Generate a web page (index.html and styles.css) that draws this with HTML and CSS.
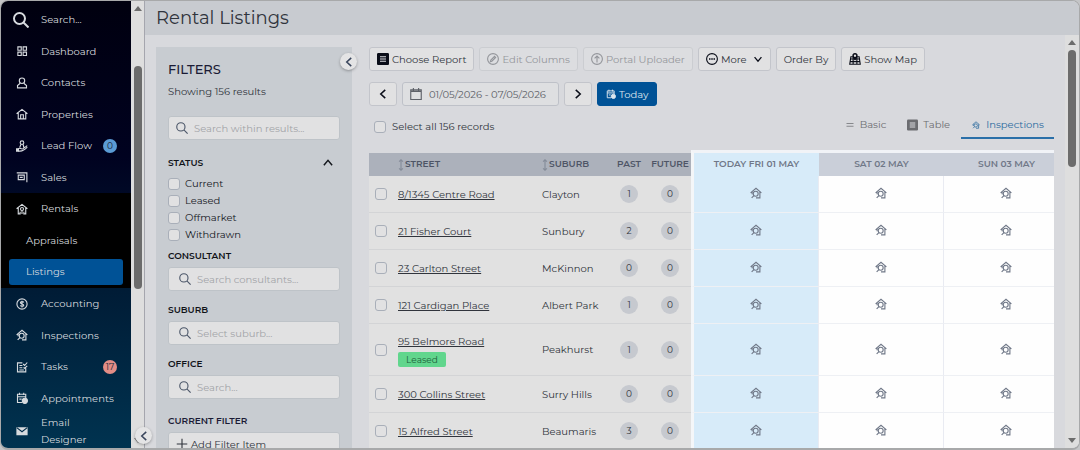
FILE: index.html
```
<!DOCTYPE html>
<html lang="en">
  <head>
    <meta charset="UTF-8" />
    <meta name="viewport" content="width=device-width, initial-scale=1.0" />
    <title>Rental Listings</title>
    <link rel="stylesheet" href="styles.css">
  </head>
  <body>
    <svg class="sprite" aria-hidden="true">
      <symbol id="i-search" viewBox="0 0 16 16"><circle cx="6.5" cy="6.5" r="5.5" /><path d="M10.5 10.5L15.5 15.5" /></symbol>
      <symbol id="i-grid" viewBox="0 0 16 16"><path d="M2.5 2.5H7V7H2.5zM9.5 2.5H14V7H9.5zM2.5 9.5H7V14H2.5zM9.5 9.5H14V14H9.5z" /></symbol>
      <symbol id="i-person" viewBox="0 0 16 16"><circle cx="8" cy="5" r="3.6" /><path d="M5.6 8.3L2 11.5V14.5h12v-3L10.4 8.3" /></symbol>
      <symbol id="i-home" viewBox="0 0 16 16"><path d="M.8 7.6L8 1.8l7.2 5.8M3 6.5v8h10v-8M6.2 14v-5h3.6v5" /></symbol>
      <symbol id="i-lead" viewBox="0 0 16 16"><circle cx="8" cy="3.5" r="2.4" /><path d="M6.5 6L5 10M9.5 6l1 4M3 12c2-3 4 1.5 6.5-.5L15 7.5M3 14.5c4 1 7.5 0 12-5" /><path d="M0 11h4v4.5H0z" fill="currentColor" stroke="none" /></symbol>
      <symbol id="i-sign" viewBox="0 0 16 16"><path d="M1 2.5h13.5V15M3 5.5h8v6H3zM5 8.5h4" /></symbol>
      <symbol id="i-rent" viewBox="0 0 16 16"><path d="M.8 7.6L8 1.8l7.2 5.8M3 6.5v8h2.5v-3M13 6.5v8h-2.5v-3" /><circle cx="8" cy="8" r="2" /><path d="M8 10v4.5" /></symbol>
      <symbol id="i-dollar" viewBox="0 0 16 16"><circle cx="8" cy="8" r="6.8" /><path d="M10.3 6c-.4-1.6-4.4-1.6-4.4.3 0 2 4.4 1.2 4.4 3.3 0 1.9-4 1.9-4.6.2M8 3.5v9" /></symbol>
      <symbol id="i-inspect" viewBox="0 0 16 16"><path d="M.8 7.8L8 1.6l7.2 6.2M2.8 6.8v3M13.2 6.8v7.7H8" /><circle cx="7.6" cy="9" r="3.3" /><path d="M5.2 11.4l-3 3" /></symbol>
      <symbol id="i-tasks" viewBox="0 0 16 16"><path d="M13 9.5v5H2v-12h6.5M4.5 6h4M4.5 9h4M4.5 12h6M9.5 4l2 2L15 2M10 8.6l1.5 1L15 6.5" /></symbol>
      <symbol id="i-appt" viewBox="0 0 16 16"><path d="M8 14H2V3h11v5M2 6.3h11M4.7 1v3M10.3 1v3M4.5 9.5h3" /><circle cx="11.8" cy="11.8" r="3.4" fill="currentColor" /></symbol>
      <symbol id="i-mail" viewBox="0 0 16 16"><path d="M.5 3h15v10.5H.5z" fill="currentColor" stroke="none" /><path d="M1 3.5l7 5.5 7-5.5" stroke="#002b48" /></symbol>
      <symbol id="i-report" viewBox="0 0 16 16"><path d="M1 0h14l1 1v14l-1 1H1l-1-1V1z" fill="currentColor" stroke="none" /><path d="M4 5h8M4 8h8M4 11h8" stroke="#d9dadd" /></symbol>
      <symbol id="i-edit" viewBox="0 0 16 16"><circle cx="8" cy="8" r="7.2" /><path d="M4.5 11.5l.6-2 5-5 1.4 1.4-5 5z" /></symbol>
      <symbol id="i-upload" viewBox="0 0 16 16"><circle cx="8" cy="8" r="7.2" /><path d="M8 12.5V4M4.8 7.2L8 4l3.2 3.2" /></symbol>
      <symbol id="i-more" viewBox="0 0 16 16"><circle cx="8" cy="8" r="7.2" /><path d="M4 8h2M7 8h2M10 8h2" stroke-width="2" /></symbol>
      <symbol id="i-map" viewBox="0 0 16 16"><path d="M2.5 5L1 15h14L13.5 5zM1.5 11.5h13M2 8h12M5.5 5v10M10.5 5v10" /><path d="M8 9C5.8 6.5 5.2 5.3 5.2 3.7a2.8 2.8 0 0 1 5.6 0c0 1.600-.6 2.800-2.800 5.300z" fill="currentColor" /><circle cx="8" cy="3.7" r=".8" fill="#e1e1e2" stroke="#e1e1e2" /></symbol>
      <symbol id="i-calendar" viewBox="0 0 16 16"><path d="M1 2.5h14v13H1zM1 4.5h14M4.5 0v3.5M11.5 0v3.5" /></symbol>
      <symbol id="i-lines" viewBox="0 0 16 16"><path d="M1 5h14M1 10.5h14" /></symbol>
      <symbol id="i-sort" viewBox="0 0 8 16"><path d="M4 1v14M1.5 3.5L4 1l2.5 2.5M1.5 12.5L4 15l2.5-2.5" /></symbol>
      <symbol id="i-left" viewBox="0 0 16 16"><path d="M11 2.5L5 8l6 5.5" /></symbol>
      <symbol id="i-right" viewBox="0 0 16 16"><path d="M5 2.5L11 8l-6 5.5" /></symbol>
      <symbol id="i-up" viewBox="0 0 16 16"><path d="M2.5 11L8 4.5l5.5 6.5" /></symbol>
      <symbol id="i-down" viewBox="0 0 16 16"><path d="M2.5 5L8 11.5 13.5 5" /></symbol>
      <symbol id="i-plus" viewBox="0 0 16 16"><path d="M8 1v14M1 8h14" /></symbol>
    </svg>

    <div class="app">
      <nav class="sidebar">
        <a class="nav-item" href="#"><svg class="icon icon-lg"><use href="#i-search" /></svg>Search...</a>
        <a class="nav-item" href="#"><svg class="icon"><use href="#i-grid" /></svg>Dashboard</a>
        <a class="nav-item" href="#"><svg class="icon"><use href="#i-person" /></svg>Contacts</a>
        <a class="nav-item" href="#"><svg class="icon"><use href="#i-home" /></svg>Properties</a>
        <a class="nav-item" href="#"><svg class="icon"><use href="#i-lead" /></svg>Lead Flow<span class="count count-blue">0</span></a>
        <a class="nav-item" href="#"><svg class="icon"><use href="#i-sign" /></svg>Sales</a>
        <div class="nav-group">
          <a class="nav-item" href="#"><svg class="icon"><use href="#i-rent" /></svg>Rentals</a>
          <a class="nav-item nav-sub" href="#">Appraisals</a>
          <a class="nav-item nav-sub active" href="#"><span>Listings</span></a>
        </div>
        <a class="nav-item" href="#"><svg class="icon"><use href="#i-dollar" /></svg>Accounting</a>
        <a class="nav-item" href="#"><svg class="icon"><use href="#i-inspect" /></svg>Inspections</a>
        <a class="nav-item" href="#"><svg class="icon"><use href="#i-tasks" /></svg>Tasks<span class="count count-red">17</span></a>
        <a class="nav-item" href="#"><svg class="icon"><use href="#i-appt" /></svg>Appointments</a>
        <a class="nav-item" href="#"><svg class="icon"><use href="#i-mail" /></svg>Email<br>Designer</a>
      </nav>

      <div class="scrollbar sidebar-scroll">
        <span class="arrow arrow-up"></span>
        <span class="thumb"></span>
        <span class="arrow arrow-down"></span>
        <button class="collapse" type="button" aria-label="Collapse menu"><svg class="icon"><use href="#i-left" /></svg></button>
      </div>

      <div class="page">
        <header class="page-header">
          <h1>Rental Listings</h1>
        </header>

        <div class="page-body">
          <aside class="filters">
            <button class="collapse" type="button" aria-label="Collapse filters"><svg class="icon"><use href="#i-left" /></svg></button>
            <h2>FILTERS</h2>
            <p>Showing 156 results</p>
            <div class="search search-main">
              <svg class="icon"><use href="#i-search" /></svg>
              <input type="text" aria-label="Search within results" placeholder="Search within results...">
            </div>

            <fieldset class="status">
              <legend>STATUS</legend>
              <button class="toggle" type="button" aria-label="Toggle status"><svg class="icon"><use href="#i-up" /></svg></button>
              <label><input type="checkbox">Current</label>
              <label><input type="checkbox">Leased</label>
              <label><input type="checkbox">Offmarket</label>
              <label><input type="checkbox">Withdrawn</label>
            </fieldset>

            <div class="field">
              <label for="consultant">CONSULTANT</label>
              <div class="search">
                <svg class="icon"><use href="#i-search" /></svg>
                <input type="text" id="consultant" placeholder="Search consultants...">
              </div>
            </div>
            <div class="field">
              <label for="suburb">SUBURB</label>
              <div class="search">
                <svg class="icon"><use href="#i-search" /></svg>
                <input type="text" id="suburb" placeholder="Select suburb...">
              </div>
            </div>
            <div class="field">
              <label for="office">OFFICE</label>
              <div class="search">
                <svg class="icon"><use href="#i-search" /></svg>
                <input type="text" id="office" placeholder="Search...">
              </div>
            </div>

            <h3>CURRENT FILTER</h3>
            <button class="add-filter" type="button"><svg class="icon"><use href="#i-plus" /></svg>Add Filter Item</button>
          </aside>

          <main class="content">
            <div class="toolbar">
              <button class="btn" type="button"><svg class="icon"><use href="#i-report" /></svg>Choose Report</button>
              <button class="btn" type="button" disabled><svg class="icon"><use href="#i-edit" /></svg>Edit Columns</button>
              <button class="btn" type="button" disabled><svg class="icon"><use href="#i-upload" /></svg>Portal Uploader</button>
              <button class="btn" type="button"><svg class="icon"><use href="#i-more" /></svg>More<svg class="icon caret"><use href="#i-down" /></svg></button>
              <button class="btn" type="button">Order By</button>
              <button class="btn" type="button"><svg class="icon"><use href="#i-map" /></svg>Show Map</button>
            </div>

            <div class="toolbar">
              <button class="btn btn-step" type="button" aria-label="Previous week"><svg class="icon"><use href="#i-left" /></svg></button>
              <div class="date-range">
                <svg class="icon"><use href="#i-calendar" /></svg>
                <input type="text" aria-label="Date range" value="01/05/2026 - 07/05/2026">
              </div>
              <button class="btn btn-step" type="button" aria-label="Next week"><svg class="icon"><use href="#i-right" /></svg></button>
              <button class="btn btn-primary" type="button"><svg class="icon"><use href="#i-appt" /></svg>Today</button>
            </div>

            <div class="view-bar">
              <label class="select-all"><input type="checkbox">Select all 156 records</label>
              <div class="tabs">
                <a class="tab" href="#"><svg class="icon icon-sm"><use href="#i-lines" /></svg>Basic</a>
                <a class="tab" href="#"><svg class="icon"><use href="#i-report" /></svg>Table</a>
                <a class="tab active" href="#"><svg class="icon icon-sm"><use href="#i-inspect" /></svg>Inspections</a>
              </div>
            </div>

            <div class="table-wrap">
              <table>
                <colgroup>
                  <col class="col-check"><col><col class="col-suburb"><col class="col-past"><col class="col-future">
                  <col class="col-today"><col class="col-day"><col class="col-day">
                </colgroup>
                <thead>
                  <tr>
                    <th></th>
                    <th><svg class="sort"><use href="#i-sort" /></svg>STREET</th>
                    <th><svg class="sort"><use href="#i-sort" /></svg>SUBURB</th>
                    <th class="num">PAST</th>
                    <th class="num">FUTURE</th>
                    <th class="day today">TODAY FRI 01 MAY</th>
                    <th class="day">SAT 02 MAY</th>
                    <th class="day">SUN 03 MAY</th>
                  </tr>
                </thead>
                <tbody>
                  <tr>
                    <td class="check"><input type="checkbox" aria-label="Select 8/1345 Centre Road"></td>
                    <td><a href="#">8/1345 Centre Road</a></td>
                    <td>Clayton</td>
                    <td class="num"><span class="pill">1</span></td>
                    <td class="num"><span class="pill">0</span></td>
                    <td class="day today"><svg class="icon"><use href="#i-inspect" /></svg></td>
                    <td class="day"><svg class="icon"><use href="#i-inspect" /></svg></td>
                    <td class="day"><svg class="icon"><use href="#i-inspect" /></svg></td>
                  </tr>
                  <tr>
                    <td class="check"><input type="checkbox" aria-label="Select 21 Fisher Court"></td>
                    <td><a href="#">21 Fisher Court</a></td>
                    <td>Sunbury</td>
                    <td class="num"><span class="pill">2</span></td>
                    <td class="num"><span class="pill">0</span></td>
                    <td class="day today"><svg class="icon"><use href="#i-inspect" /></svg></td>
                    <td class="day"><svg class="icon"><use href="#i-inspect" /></svg></td>
                    <td class="day"><svg class="icon"><use href="#i-inspect" /></svg></td>
                  </tr>
                  <tr>
                    <td class="check"><input type="checkbox" aria-label="Select 23 Carlton Street"></td>
                    <td><a href="#">23 Carlton Street</a></td>
                    <td>McKinnon</td>
                    <td class="num"><span class="pill">0</span></td>
                    <td class="num"><span class="pill">0</span></td>
                    <td class="day today"><svg class="icon"><use href="#i-inspect" /></svg></td>
                    <td class="day"><svg class="icon"><use href="#i-inspect" /></svg></td>
                    <td class="day"><svg class="icon"><use href="#i-inspect" /></svg></td>
                  </tr>
                  <tr>
                    <td class="check"><input type="checkbox" aria-label="Select 121 Cardigan Place"></td>
                    <td><a href="#">121 Cardigan Place</a></td>
                    <td>Albert Park</td>
                    <td class="num"><span class="pill">1</span></td>
                    <td class="num"><span class="pill">0</span></td>
                    <td class="day today"><svg class="icon"><use href="#i-inspect" /></svg></td>
                    <td class="day"><svg class="icon"><use href="#i-inspect" /></svg></td>
                    <td class="day"><svg class="icon"><use href="#i-inspect" /></svg></td>
                  </tr>
                  <tr>
                    <td class="check"><input type="checkbox" aria-label="Select 95 Belmore Road"></td>
                    <td class="tall"><a href="#">95 Belmore Road</a><span class="tag">Leased</span></td>
                    <td>Peakhurst</td>
                    <td class="num"><span class="pill">1</span></td>
                    <td class="num"><span class="pill">0</span></td>
                    <td class="day today"><svg class="icon"><use href="#i-inspect" /></svg></td>
                    <td class="day"><svg class="icon"><use href="#i-inspect" /></svg></td>
                    <td class="day"><svg class="icon"><use href="#i-inspect" /></svg></td>
                  </tr>
                  <tr>
                    <td class="check"><input type="checkbox" aria-label="Select 300 Collins Street"></td>
                    <td><a href="#">300 Collins Street</a></td>
                    <td>Surry Hills</td>
                    <td class="num"><span class="pill">0</span></td>
                    <td class="num"><span class="pill">0</span></td>
                    <td class="day today"><svg class="icon"><use href="#i-inspect" /></svg></td>
                    <td class="day"><svg class="icon"><use href="#i-inspect" /></svg></td>
                    <td class="day"><svg class="icon"><use href="#i-inspect" /></svg></td>
                  </tr>
                  <tr>
                    <td class="check"><input type="checkbox" aria-label="Select 15 Alfred Street"></td>
                    <td><a href="#">15 Alfred Street</a></td>
                    <td>Beaumaris</td>
                    <td class="num"><span class="pill">3</span></td>
                    <td class="num"><span class="pill">0</span></td>
                    <td class="day today"><svg class="icon"><use href="#i-inspect" /></svg></td>
                    <td class="day"><svg class="icon"><use href="#i-inspect" /></svg></td>
                    <td class="day"><svg class="icon"><use href="#i-inspect" /></svg></td>
                  </tr>
                </tbody>
              </table>
            </div>
          </main>

          <div class="scrollbar page-scroll">
            <span class="arrow arrow-up"></span>
            <span class="thumb"></span>
            <span class="arrow arrow-down"></span>
          </div>
        </div>
      </div>
    </div>
  </body>
</html>
```

FILE: styles.css
```
* {
  box-sizing: border-box;
}

body {
  margin: 0;
  background: #c4c5c7;
  color: #30343c;
  font-family: Montserrat, Inter, sans-serif;
  font-size: 10px;
  line-height: 17px;
}

button,
input {
  font: inherit;
  color: inherit;
}

h1,
h2,
h3,
p {
  margin: 0;
}

a {
  color: inherit;
}

.sprite {
  display: none;
}

.icon {
  flex: none;
  width: 12px;
  height: 12px;
  fill: none;
  stroke: currentColor;
  stroke-width: 1.5;
}

.app {
  display: flex;
  height: 100vh;
  overflow: hidden;
  border: 1px solid #a8a9aa;
  border-bottom-width: 2px;
  border-radius: 8px;
  background: #d8d9dd;
}

/* sidebar */
.sidebar {
  display: flex;
  flex: none;
  flex-direction: column;
  width: 130px;
  padding-top: 3px;
  background: linear-gradient(#00000f, #000220 35%, #001c36 65%, #003350);
  color: #d6dade;
}

.nav-item {
  display: flex;
  flex: 1 1 0;
  align-items: center;
  padding: 0 14px 0 15px;
  text-decoration: none;
}

.nav-item .icon {
  margin-right: 13px;
}

.nav-item .icon-lg {
  width: 16px;
  height: 16px;
  margin: 0 12px 0 -3px;
  stroke-width: 2;
}

.nav-group {
  display: flex;
  flex: 3 1 0;
  flex-direction: column;
  background: #000;
}

.nav-sub {
  padding: 0 8px 0 25px;
}

.nav-sub.active {
  padding-left: 8px;
}

.nav-sub.active span {
  flex: 1;
  padding: 4px 17px 5px;
  border-radius: 3px;
  background: #005296;
}

.count {
  width: 14px;
  height: 14px;
  margin-left: auto;
  border-radius: 50%;
  color: #20283a;
  font-size: 9px;
  line-height: 14px;
  text-align: center;
}

.count-blue {
  background: #5a9bd5;
}

.count-red {
  background: #e38d86;
}

/* scrollbars */
.scrollbar {
  position: relative;
  display: flex;
  flex: none;
  flex-direction: column;
  align-items: center;
  width: 14px;
  padding: 5px 0;
  background: #dedede;
}

.arrow {
  border: 4px solid transparent;
}

.arrow-up {
  border-top: 0;
  border-bottom: 5px solid #6c6c6c;
}

.arrow-down {
  margin-top: auto;
  border-top: 5px solid #6c6c6c;
  border-bottom: 0;
}

.thumb {
  width: 8px;
  border-radius: 4px;
  background: #6c6c6c;
}

.sidebar-scroll {
  border-right: 1px solid #a5a6ae;
}

.sidebar-scroll .thumb {
  height: 51%;
  margin-top: 55px;
}

.page-scroll .thumb {
  height: 29%;
  margin-top: 5px;
}

.collapse {
  position: absolute;
  z-index: 1;
  display: grid;
  place-items: center;
  width: 17px;
  height: 17px;
  padding: 0;
  border: 0;
  border-radius: 50%;
  background: #e4e4e5;
  box-shadow: 0 1px 3px rgba(0, 0, 0, 0.3);
  color: #39455c;
}

.collapse .icon {
  stroke-width: 2;
}

.sidebar-scroll .collapse {
  right: -8px;
  bottom: 4px;
}

.filters .collapse {
  top: 6px;
  right: -5px;
}

/* page */
.page {
  display: flex;
  flex: 1;
  flex-direction: column;
  min-width: 0;
}

.page-header {
  flex: none;
  padding: 6px 11px 5px;
  background: #c8cbd0;
}

h1 {
  font-size: 18px;
  font-weight: 400;
  line-height: 23px;
}

.page-body {
  display: flex;
  flex: 1;
  min-height: 0;
}

/* filters */
.filters {
  position: relative;
  flex: none;
  width: 196px;
  margin: 12px 17px 0 11px;
  padding: 12px;
  background: #c8ccd1;
}

.filters h2 {
  color: #1b1b35;
  font-size: 13px;
  font-weight: 500;
  line-height: 20px;
}

.filters p {
  margin: 4px 0 16px;
}

.search {
  display: flex;
  align-items: center;
  height: 24px;
  padding: 0 10px;
  border: 1px solid #bec3c8;
  border-radius: 3px;
  background: #e1e1e2;
  color: #4c5769;
}

.search input {
  flex: 1;
  min-width: 0;
  margin-left: 6px;
  padding: 0;
  border: 0;
  outline: 0;
  background: none;
}

.search-main {
  padding: 0 7px;
}

.search ::placeholder {
  color: #a2a4a8;
}

.status {
  position: relative;
  margin: 14px 0 4px;
  padding: 0;
  border: 0;
}

.status legend,
.field label,
.filters h3 {
  padding: 0;
  color: #101218;
  font-size: 9px;
  font-weight: 600;
  line-height: 17px;
}

.status legend {
  margin-bottom: 4px;
}

.status label {
  display: flex;
  align-items: center;
  color: #15181e;
}

.toggle {
  position: absolute;
  top: -18px;
  right: 6px;
  height: 12px;
  padding: 0;
  border: 0;
  background: none;
}

.toggle .icon {
  stroke: #15181e;
  stroke-width: 2;
}

input[type='checkbox'] {
  flex: none;
  width: 12px;
  height: 12px;
  margin: 0;
  border: 1px solid #a9afb9;
  border-radius: 3px;
  background: #e1e1e2;
  appearance: none;
}

.status input[type='checkbox'] {
  margin-right: 5px;
}

.field {
  margin-bottom: 10px;
}

.field label {
  display: block;
  margin: 1px 0 3px;
}

.field + .field label {
  margin-top: 0;
}

.filters h3 {
  padding: 3px 0;
  color: #1b1b35;
}

.add-filter {
  display: flex;
  align-items: center;
  gap: 3px;
  width: 100%;
  height: 24px;
  padding: 0 7px;
  border: 1px solid #bec3c8;
  border-radius: 3px;
  background: #e1e1e2;
}

/* content */
.content {
  flex: 1;
  min-width: 0;
  margin-right: 11px;
  padding-top: 12px;
  overflow: hidden;
}

.toolbar {
  display: flex;
  gap: 5px;
  margin-bottom: 11px;
}

.btn {
  display: flex;
  align-items: center;
  gap: 3px;
  height: 24px;
  padding: 0 7px;
  border: 1px solid #c3c5cb;
  border-radius: 3px;
  background: #e1e1e2;
  white-space: nowrap;
}

.btn .icon {
  color: #0a0d18;
}

.btn:disabled {
  border-color: #cbcdd1;
  background: #dcdde0;
  color: #94969b;
}

.btn:disabled .icon {
  color: inherit;
}

.btn .caret {
  width: 10px;
  margin-left: 3px;
  stroke-width: 2;
}

.btn-step .icon {
  stroke-width: 2;
}

.btn-primary {
  padding: 0 8px;
  border-color: #005296;
  background: #005296;
  color: #dde6ee;
}

.btn-primary .icon {
  width: 10px;
  color: inherit;
}

.date-range {
  display: flex;
  align-items: center;
  gap: 7px;
  width: 157px;
  padding: 0 7px;
  border: 1px solid #bec1c8;
  border-radius: 3px;
  background: #dedfe1;
  color: #5d6168;
}

.date-range input {
  flex: 1;
  min-width: 0;
  padding: 0;
  border: 0;
  outline: 0;
  background: none;
}

.view-bar {
  display: flex;
  align-items: flex-start;
  justify-content: space-between;
  margin-bottom: 11px;
}

.select-all {
  display: flex;
  align-items: center;
  gap: 6px;
  padding: 1px 0 0 5px;
}

.tabs {
  display: flex;
  gap: 1px;
  margin-top: -4px;
}

.tab {
  display: flex;
  align-items: center;
  gap: 5px;
  padding: 3px 10px 4px;
  border-bottom: 2px solid transparent;
  color: #6b6c70;
  text-decoration: none;
}

.tab .icon {
  width: 11px;
}

.tab .icon-sm {
  width: 8px;
  margin: 0 1px;
}

.tab.active {
  border-color: #2a6fa8;
  color: #2a6a9e;
}

/* table */
.table-wrap {
  overflow: hidden;
}

/* the last day runs past the edge of the wrap */
table {
  width: calc(100% + 15px);
  border-spacing: 0;
  table-layout: fixed;
}

.col-check {
  width: 29px;
}

.col-suburb {
  width: 67px;
}

.col-past {
  width: 40px;
}

.col-future {
  width: 42px;
}

.col-today {
  width: 128px;
}

.col-day {
  width: 125px;
}

th {
  height: 26px;
  padding: 0 0 2px;
  border-top: 3px solid transparent;
  background: #acb1bb;
  background-clip: padding-box;
  color: #4e5566;
  font-size: 9px;
  font-weight: 600;
  text-align: left;
  white-space: nowrap;
}

th.day {
  border-top-color: #f1f3f7;
  background: #cacfd9;
  color: #707888;
}

.sort {
  width: 6px;
  height: 12px;
  margin-right: 1px;
  fill: none;
  stroke: #858c99;
  stroke-width: 1.5;
  vertical-align: middle;
}

td {
  height: 37px;
  padding: 0;
  border-bottom: 1px solid #d3d4d6;
  background: #e1e1e1;
  white-space: nowrap;
}

td.check {
  padding-left: 6px;
}

td input[type='checkbox'] {
  display: block;
}

td.tall {
  height: 52px;
}

.tag {
  display: block;
  width: 48px;
  margin-top: 2px;
  border-radius: 2px;
  background: #61d68d;
  color: #20603c;
  font-size: 9px;
  line-height: 15px;
  text-align: center;
}

th.num,
td.num,
th.day,
td.day {
  text-align: center;
}

.pill {
  display: inline-block;
  width: 18px;
  height: 18px;
  border-radius: 50%;
  background: #c6c9cf;
  font-size: 9px;
  line-height: 18px;
}

td.day {
  padding-bottom: 3px;
  border-right: 1px solid #e9ebf2;
  border-bottom-color: #eef0f4;
  background: #fefefe;
  color: #707888;
}

th.today,
td.today {
  border-left: 3px solid #f4f6f8;
  background: #d7ebf9;
}

td .icon {
  vertical-align: middle;
}
```
